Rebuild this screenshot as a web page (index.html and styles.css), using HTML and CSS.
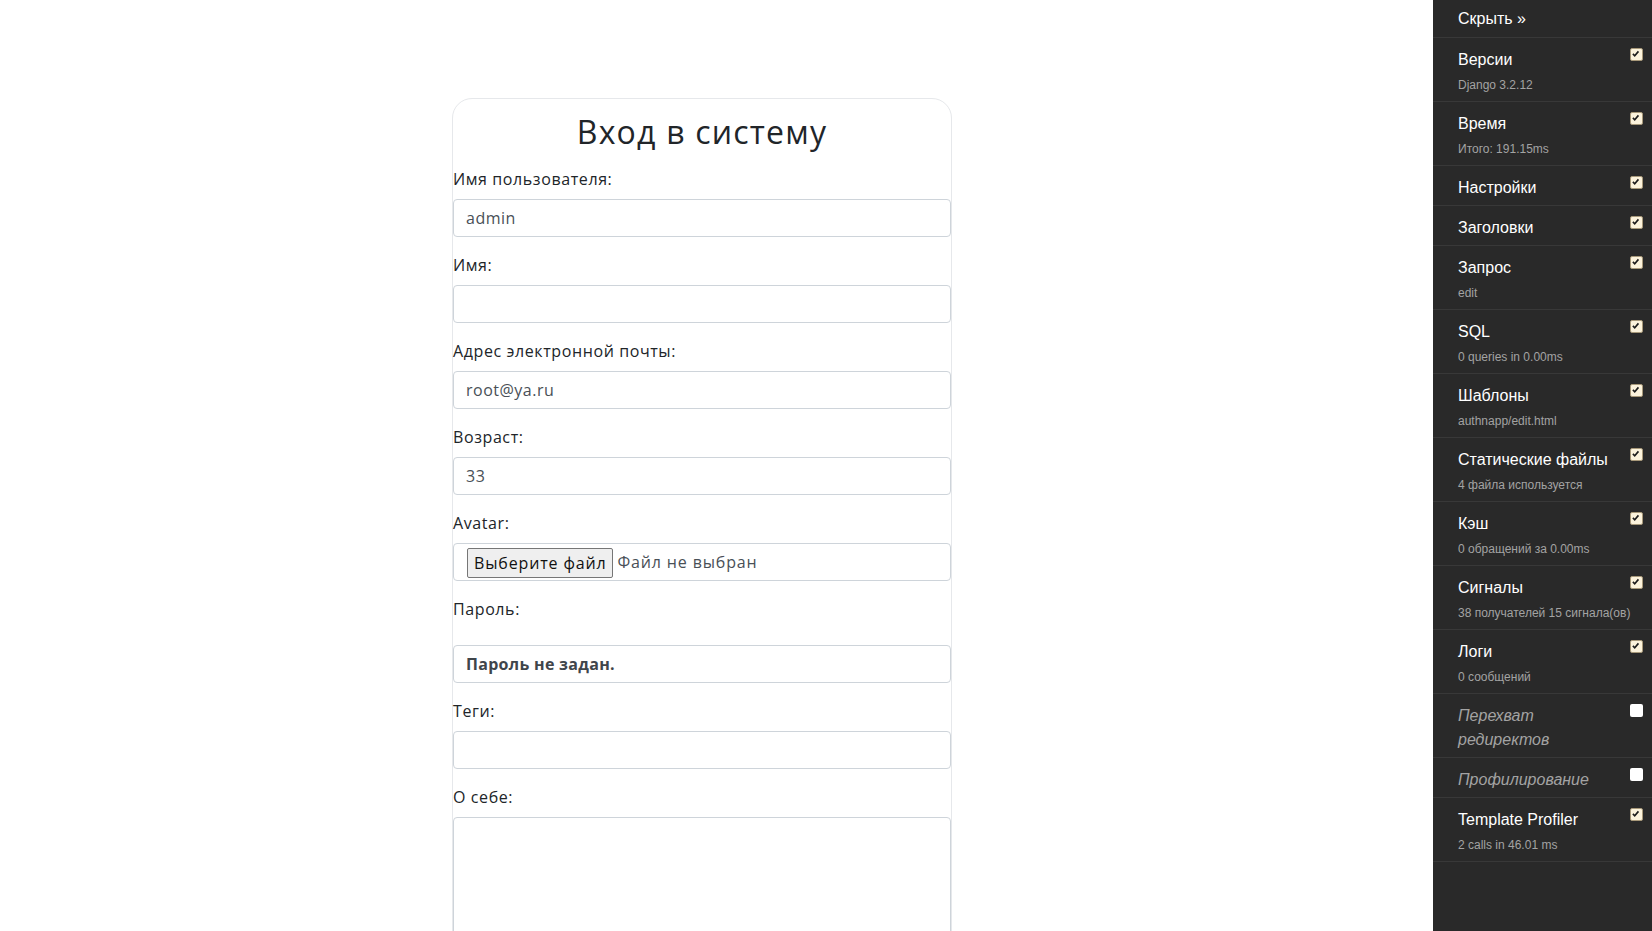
FILE: index.html
```html
<!DOCTYPE html>
<html lang="ru">
<head>
<meta charset="utf-8">
<title>Вход в систему</title>
<link rel="stylesheet" href="styles.css">
</head>
<body>
<main class="page">
  <section class="card">
    <h2 class="card-title">Вход в систему</h2>
    <form class="form">
      <div class="form-group">
        <label class="label">Имя пользователя:</label>
        <div class="form-control">admin</div>
      </div>
      <div class="form-group">
        <label class="label">Имя:</label>
        <div class="form-control"></div>
      </div>
      <div class="form-group">
        <label class="label">Адрес электронной почты:</label>
        <div class="form-control">root@ya.ru</div>
      </div>
      <div class="form-group">
        <label class="label">Возраст:</label>
        <div class="form-control">33</div>
      </div>
      <div class="form-group">
        <label class="label">Avatar:</label>
        <div class="form-control file-control">
          <span class="file-btn">Выберите файл</span>
          <span class="file-name">Файл не выбран</span>
        </div>
      </div>
      <div class="form-group">
        <label class="label">Пароль:</label>
        <div class="form-control password-box"><strong>Пароль не задан.</strong></div>
      </div>
      <div class="form-group">
        <label class="label">Теги:</label>
        <div class="form-control"></div>
      </div>
      <div class="form-group">
        <label class="label">О себе:</label>
        <div class="form-control textarea"></div>
      </div>
    </form>
  </section>
</main>

<aside class="djdt">
  <ul class="djdt-list">
    <li class="djdt-item djdt-hide"><a class="djdt-link">Скрыть »</a></li>
    <li class="djdt-item"><span class="cb on"><svg viewBox="0 0 13 13"><path d="M3.2 6.8 L5.4 9 L9.8 3.8" /></svg></span><a class="djdt-link">Версии<small>Django 3.2.12</small></a></li>
    <li class="djdt-item"><span class="cb on"><svg viewBox="0 0 13 13"><path d="M3.2 6.8 L5.4 9 L9.8 3.8" /></svg></span><a class="djdt-link">Время<small>Итого: 191.15ms</small></a></li>
    <li class="djdt-item"><span class="cb on"><svg viewBox="0 0 13 13"><path d="M3.2 6.8 L5.4 9 L9.8 3.8" /></svg></span><a class="djdt-link">Настройки</a></li>
    <li class="djdt-item"><span class="cb on"><svg viewBox="0 0 13 13"><path d="M3.2 6.8 L5.4 9 L9.8 3.8" /></svg></span><a class="djdt-link">Заголовки</a></li>
    <li class="djdt-item"><span class="cb on"><svg viewBox="0 0 13 13"><path d="M3.2 6.8 L5.4 9 L9.8 3.8" /></svg></span><a class="djdt-link">Запрос<small>edit</small></a></li>
    <li class="djdt-item"><span class="cb on"><svg viewBox="0 0 13 13"><path d="M3.2 6.8 L5.4 9 L9.8 3.8" /></svg></span><a class="djdt-link">SQL<small>0 queries in 0.00ms</small></a></li>
    <li class="djdt-item"><span class="cb on"><svg viewBox="0 0 13 13"><path d="M3.2 6.8 L5.4 9 L9.8 3.8" /></svg></span><a class="djdt-link">Шаблоны<small>authnapp/edit.html</small></a></li>
    <li class="djdt-item"><span class="cb on"><svg viewBox="0 0 13 13"><path d="M3.2 6.8 L5.4 9 L9.8 3.8" /></svg></span><a class="djdt-link">Статические файлы<small>4 файла используется</small></a></li>
    <li class="djdt-item"><span class="cb on"><svg viewBox="0 0 13 13"><path d="M3.2 6.8 L5.4 9 L9.8 3.8" /></svg></span><a class="djdt-link">Кэш<small>0 обращений за 0.00ms</small></a></li>
    <li class="djdt-item"><span class="cb on"><svg viewBox="0 0 13 13"><path d="M3.2 6.8 L5.4 9 L9.8 3.8" /></svg></span><a class="djdt-link">Сигналы<small>38 получателей 15 сигнала(ов)</small></a></li>
    <li class="djdt-item"><span class="cb on"><svg viewBox="0 0 13 13"><path d="M3.2 6.8 L5.4 9 L9.8 3.8" /></svg></span><a class="djdt-link">Логи<small>0 сообщений</small></a></li>
    <li class="djdt-item"><span class="cb off"></span><div class="djdt-link disabled">Перехват редиректов</div></li>
    <li class="djdt-item"><span class="cb off"></span><div class="djdt-link disabled">Профилирование</div></li>
    <li class="djdt-item"><span class="cb on"><svg viewBox="0 0 13 13"><path d="M3.2 6.8 L5.4 9 L9.8 3.8" /></svg></span><a class="djdt-link">Template Profiler<small>2 calls in 46.01 ms</small></a></li>
  </ul>
</aside>
</body>
</html>
```
FILE: styles.css
```css
* { box-sizing: border-box; }

html, body {
  margin: 0;
  padding: 0;
  background: #fff;
}

body {
  font-family: "Open Sans", "Noto Sans", sans-serif;
  font-size: 16px;
  line-height: 24px;
  color: #212529;
  overflow: hidden;
  height: 931px;
}

.page {
  padding: 98px 0 0 452px;
}

.card {
  width: 500px;
  border: 1px solid #e6e8eb;
  border-radius: 20px;
  padding-top: 14px;
  min-height: 1100px;
}

.card-title {
  margin: 0 0 16px;
  text-align: center;
  font-weight: 400;
  font-size: 32px;
  line-height: 38px;
  color: #212529;
  letter-spacing: 1.2px;
}

.form {
  margin: 0;
}

.form-group {
  margin-bottom: 16px;
}

.label {
  display: block;
  margin-bottom: 8px;
  letter-spacing: 0.6px;
  color: #212529;
}

.form-control {
  height: 38px;
  border: 1px solid #ced4da;
  border-radius: 4px;
  padding: 6px 12px;
  color: #495057;
  letter-spacing: 0.5px;
}

.file-control {
  display: flex;
  align-items: center;
  padding: 0 12px 0 13px;
}

.file-btn {
  display: inline-block;
  height: 30px;
  padding: 0 6px;
  margin-top: 2px;
  line-height: 28px;
  background: #efefef;
  border: 1px solid #767676;
  border-radius: 2px;
  color: #111;
  letter-spacing: 0.85px;
}

.file-name {
  margin-left: 4px;
  letter-spacing: 0.85px;
}

.password-box {
  margin-top: 24px;
}

.password-box strong {
  font-weight: 700;
  color: #3f454b;
  letter-spacing: 0.3px;
}

.textarea {
  height: 150px;
}

/* Debug toolbar */
.djdt {
  position: fixed;
  top: 0;
  right: 0;
  width: 219px;
  height: 100%;
  background: #292929;
  font-family: "Liberation Sans", Arial, sans-serif;
}

.djdt-list {
  list-style: none;
  margin: 0;
  padding: 0;
}

.djdt-item {
  border-bottom: 1px solid #383838;
}

.djdt-link {
  display: block;
  padding: 10px 10px 5px 25px;
  font-size: 16px;
  line-height: 24px;
  color: #fff;
  text-decoration: none;
}

.djdt-hide .djdt-link {
  padding: 7px 0 6px 25px;
}

.djdt-link small {
  display: block;
  font-size: 12px;
  line-height: 24px;
  margin-top: 1px;
  margin-bottom: -1px;
  color: #a3a3a3;
}

.djdt-link.disabled {
  font-style: italic;
  color: #a3a3a3;
}

.cb {
  float: right;
  width: 13px;
  height: 13px;
  margin: 10px 9px 10px 10px;
  border-radius: 2px;
}

.cb.on {
  background: #fcf3dc;
  border: 1px solid #a8997a;
}

.cb.on svg {
  display: block;
  width: 11px;
  height: 11px;
}

.cb.on svg path {
  fill: none;
  stroke: #1c1c1c;
  stroke-width: 1.9;
  transform: translate(-1px, -1px);
}

.cb.off {
  background: #fff;
}
```
